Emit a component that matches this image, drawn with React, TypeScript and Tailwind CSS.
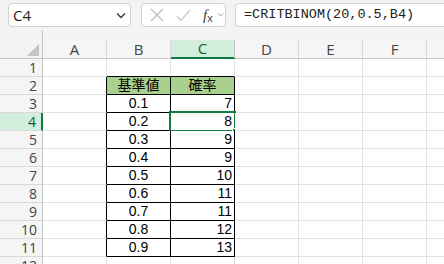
import React from "react";

const cols = ["A", "B", "C", "D", "E", "F", ""];
const data: [string, string][] = [
  ["0.1", "7"],
  ["0.2", "8"],
  ["0.3", "9"],
  ["0.4", "9"],
  ["0.5", "10"],
  ["0.6", "11"],
  ["0.7", "11"],
  ["0.8", "12"],
  ["0.9", "13"],
];

function Cell({ r, c }: { r: number; c: number }) {
  const inTable = (c === 1 || c === 2) && r >= 2 && r <= 11;
  const rightBlack = (c === 0 || c === 1 || c === 2) && r >= 2 && r <= 11;
  const bottomBlack = (c === 1 || c === 2) && r >= 1 && r <= 11;
  const isHead = inTable && r === 2;
  const selected = r === 4 && c === 2;
  let text = "";
  if (isHead) text = c === 1 ? "基準値" : "確率";
  else if (inTable) text = data[r - 3][c - 1];
  return (
    <div
      className={
        "relative h-[18px] border-r border-b leading-[17px] text-[14px] text-black font-['Liberation_Sans','Noto_Sans_CJK_JP',sans-serif] " +
        (rightBlack ? "border-r-black " : "border-r-[#e1e1e1] ") +
        (bottomBlack ? "border-b-black " : "border-b-[#e1e1e1] ") +
        (isHead ? "bg-[#a9d08e] text-center " : "bg-white ") +
        (inTable && !isHead ? (c === 1 ? "text-center " : "text-right pr-[2px] ") : "")
      }
    >
      {text}
      {selected && (
        <>
          <div className="absolute -left-[2px] -top-[2px] -right-[2px] -bottom-[2px] border-2 border-[#107c41] pointer-events-none" />
          <div className="absolute -right-[4px] -bottom-[4px] w-[6px] h-[6px] bg-[#107c41] border border-white" />
        </>
      )}
    </div>
  );
}

export default function App() {
  const rows = Array.from({ length: 12 }, (_, i) => i + 1);
  return (
    <div className="w-[444px] h-[264px] overflow-hidden bg-white font-['Open_Sans',sans-serif]">
      {/* top bar */}
      <div className="w-[444px] h-[30px] bg-[#f3f3f3] flex items-start pt-[3px] pl-[8px] overflow-hidden">
        <div className="shrink-0 w-[123px] h-[24px] bg-white border border-[#d1d1d1] rounded-[4px] flex items-center pl-[4px] pr-[3px] justify-between">
          <span className="text-[15px] text-[#222] leading-none">C4</span>
          <svg width="12" height="12" viewBox="0 0 12 12" fill="none" stroke="#333" strokeWidth="1.3">
            <path d="M2 4.5 L6 8.5 L10 4.5" />
          </svg>
        </div>
        <div className="shrink-0 ml-[10px] w-[85px] h-[24px] bg-white border border-[#d1d1d1] rounded-[4px] flex items-center pl-[8px]">
          <svg width="14" height="14" viewBox="0 0 14 14" fill="none" stroke="#b9b9b9" strokeWidth="1.1">
            <path d="M1 1 L13 13 M13 1 L1 13" />
          </svg>
          <svg className="ml-[12px]" width="15" height="13" viewBox="0 0 15 13" fill="none" stroke="#b9b9b9" strokeWidth="1.1">
            <path d="M1 7 L5 11.5 L14 1" />
          </svg>
          <span className="ml-[12px] font-['Liberation_Serif',serif] italic text-[15px] text-[#444] leading-none">
            f<span className="text-[11px] not-italic font-['Liberation_Sans',sans-serif] relative top-[2px]">x</span>
          </span>
          <svg className="ml-[4px]" width="7" height="6" viewBox="0 0 7 6" fill="none" stroke="#999" strokeWidth="1">
            <path d="M1 1.5 L3.5 4 L6 1.5" />
          </svg>
        </div>
        <div className="shrink-0 ml-[9px] w-[230px] h-[24px] bg-white border border-[#d1d1d1] rounded-[4px] flex items-center pl-[8px]">
          <span className="font-['Liberation_Mono',monospace] text-[13.5px] text-[#222] leading-none">=CRITBINOM(20,0.5,B4)</span>
        </div>
      </div>
      <div className="h-[10px] bg-[#f3f3f3] flex">
        <div className="w-[43px] border-r border-[#c6c6c6]" />
      </div>
      {/* grid */}
      <div className="w-[491px] grid grid-cols-[43px_64px_64px_64px_64px_64px_64px_64px]">
        <div className="relative h-[19px] bg-[#f3f3f3] border-r border-b border-[#c6c6c6]">
          <svg className="absolute right-[3px] bottom-[2px]" width="12" height="12" viewBox="0 0 12 12">
            <path d="M12 0 L12 12 L0 12 Z" fill="#c4c4c4" />
          </svg>
        </div>
        {cols.map((c, i) => (
          <div
            key={i}
            className={
              "h-[19px] border-r flex items-center justify-center text-[15px] leading-none " +
              (i === 2
                ? "bg-[#d3eedd] border-r-[#c6c6c6] border-b-2 border-b-[#107c41] text-[#0e5c2f]"
                : "bg-[#f5f5f5] border-r-[#d9d9d9] border-b border-b-[#c6c6c6] text-[#444]")
            }
          >
            {c}
          </div>
        ))}
        {rows.map((r) => (
          <React.Fragment key={r}>
            <div
              className={
                "h-[18px] border-b flex items-center justify-end pr-[5px] text-[14px] leading-none " +
                (r === 4
                  ? "bg-[#d3eedd] border-r-2 border-r-[#107c41] border-b-[#d9d9d9] text-[#0e5c2f]"
                  : "bg-[#f5f5f5] border-r border-r-[#c6c6c6] border-b-[#d9d9d9] text-[#444]")
              }
            >
              {r}
            </div>
            {cols.map((_, ci) => (
              <Cell key={ci} r={r} c={ci} />
            ))}
          </React.Fragment>
        ))}
      </div>
    </div>
  );
}
